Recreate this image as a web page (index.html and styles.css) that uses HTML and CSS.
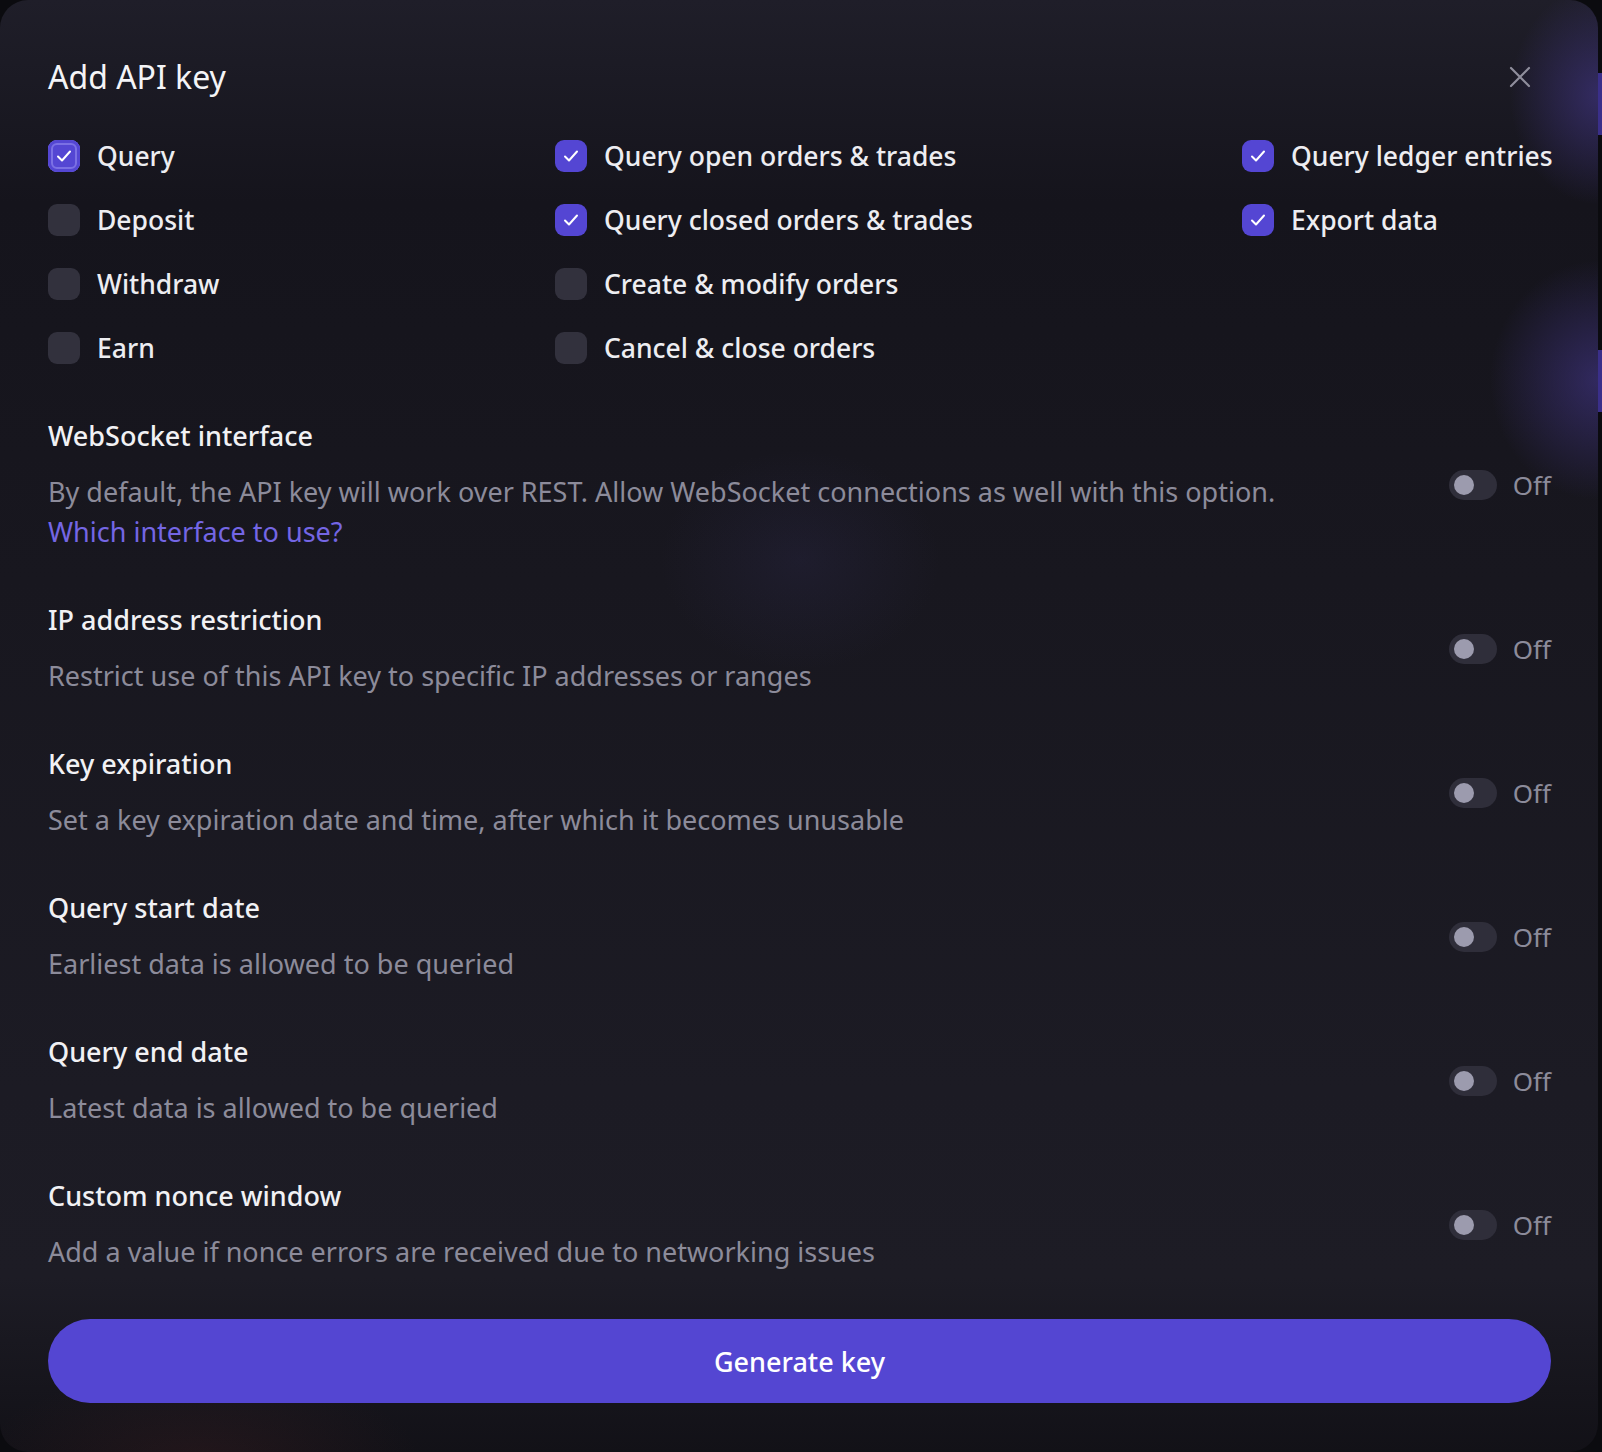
FILE: index.html
```html
<!DOCTYPE html>
<html lang="en">
<head>
<meta charset="utf-8">
<title>Add API key</title>
<link rel="stylesheet" href="styles.css">
</head>
<body>
<div class="modal">
  <header class="modal-header">
    <h1 class="modal-title">Add API key</h1>
    <button class="close-btn" aria-label="Close">
      <svg width="22" height="22" viewBox="0 0 22 22"><path d="M2 2L20 20M20 2L2 20" stroke="#8f8e9c" stroke-width="2.2" stroke-linecap="round" fill="none"/></svg>
    </button>
  </header>

  <div class="perm-grid">
    <div class="perm-col col-1">
      <label class="perm"><span class="cb checked focused"><svg viewBox="0 0 32 32"><path d="M10 16.5l4 4 8-9" /></svg></span><span class="perm-label">Query</span></label>
      <label class="perm"><span class="cb"></span><span class="perm-label">Deposit</span></label>
      <label class="perm"><span class="cb"></span><span class="perm-label">Withdraw</span></label>
      <label class="perm"><span class="cb"></span><span class="perm-label">Earn</span></label>
    </div>
    <div class="perm-col col-2">
      <label class="perm"><span class="cb checked"><svg viewBox="0 0 32 32"><path d="M10 16.5l4 4 8-9" /></svg></span><span class="perm-label">Query open orders &amp; trades</span></label>
      <label class="perm"><span class="cb checked"><svg viewBox="0 0 32 32"><path d="M10 16.5l4 4 8-9" /></svg></span><span class="perm-label">Query closed orders &amp; trades</span></label>
      <label class="perm"><span class="cb"></span><span class="perm-label">Create &amp; modify orders</span></label>
      <label class="perm"><span class="cb"></span><span class="perm-label">Cancel &amp; close orders</span></label>
    </div>
    <div class="perm-col col-3">
      <label class="perm"><span class="cb checked"><svg viewBox="0 0 32 32"><path d="M10 16.5l4 4 8-9" /></svg></span><span class="perm-label">Query ledger entries</span></label>
      <label class="perm"><span class="cb checked"><svg viewBox="0 0 32 32"><path d="M10 16.5l4 4 8-9" /></svg></span><span class="perm-label">Export data</span></label>
    </div>
  </div>

  <div class="settings">
    <div class="setting">
      <div class="setting-text">
        <div class="setting-title">WebSocket interface</div>
        <div class="setting-desc">By default, the API key will work over REST. Allow WebSocket connections as well with this option.</div>
        <a class="setting-link" href="#">Which interface to use?</a>
      </div>
      <div class="toggle-wrap"><span class="toggle"><span class="knob"></span></span><span class="toggle-label">Off</span></div>
    </div>
    <div class="setting">
      <div class="setting-text">
        <div class="setting-title">IP address restriction</div>
        <div class="setting-desc">Restrict use of this API key to specific IP addresses or ranges</div>
      </div>
      <div class="toggle-wrap"><span class="toggle"><span class="knob"></span></span><span class="toggle-label">Off</span></div>
    </div>
    <div class="setting">
      <div class="setting-text">
        <div class="setting-title">Key expiration</div>
        <div class="setting-desc">Set a key expiration date and time, after which it becomes unusable</div>
      </div>
      <div class="toggle-wrap"><span class="toggle"><span class="knob"></span></span><span class="toggle-label">Off</span></div>
    </div>
    <div class="setting">
      <div class="setting-text">
        <div class="setting-title">Query start date</div>
        <div class="setting-desc">Earliest data is allowed to be queried</div>
      </div>
      <div class="toggle-wrap"><span class="toggle"><span class="knob"></span></span><span class="toggle-label">Off</span></div>
    </div>
    <div class="setting">
      <div class="setting-text">
        <div class="setting-title">Query end date</div>
        <div class="setting-desc">Latest data is allowed to be queried</div>
      </div>
      <div class="toggle-wrap"><span class="toggle"><span class="knob"></span></span><span class="toggle-label">Off</span></div>
    </div>
    <div class="setting">
      <div class="setting-text">
        <div class="setting-title">Custom nonce window</div>
        <div class="setting-desc">Add a value if nonce errors are received due to networking issues</div>
      </div>
      <div class="toggle-wrap"><span class="toggle"><span class="knob"></span></span><span class="toggle-label">Off</span></div>
    </div>
  </div>

  <button class="generate-btn">Generate key</button>
</div>
</body>
</html>
```

FILE: styles.css
```css
* { box-sizing: border-box; }

html, body {
  margin: 0;
  padding: 0;
}

body {
  width: 1602px;
  height: 1452px;
  overflow: hidden;
  font-family: "Noto Sans", "Open Sans", sans-serif;
  background-color: #0b0b0f;
  background-image:
    linear-gradient(#3a2f8a, #3a2f8a),
    linear-gradient(#3a2f8a, #3a2f8a);
  background-repeat: no-repeat;
  background-size: 6px 62px, 6px 62px;
  background-position: 1598px 73px, 1598px 350px;
}

.modal {
  width: 1598px;
  height: 1452px;
  border-radius: 28px;
  padding: 56px 47px 48px 48px;
  display: flex;
  flex-direction: column;
  background:
    radial-gradient(ellipse 90px 110px at 1600px 95px, rgba(72, 58, 150, 0.55), rgba(72, 58, 150, 0) 100%),
    radial-gradient(ellipse 110px 120px at 1600px 380px, rgba(72, 58, 150, 0.55), rgba(72, 58, 150, 0) 100%),
    radial-gradient(ellipse 140px 110px at 800px 560px, rgba(60, 55, 110, 0.18), rgba(60, 55, 110, 0) 100%),
    radial-gradient(ellipse 220px 90px at 200px 1460px, rgba(90, 40, 40, 0.22), rgba(90, 40, 40, 0) 100%),
    linear-gradient(180deg, #1f1e29 0%, #15141c 14%, #18171f 40%, #1c1b24 75%, #1d1c25 88%, #121117 100%);
  color: #f2f2f5;
}

.modal-header {
  display: flex;
  align-items: center;
  justify-content: space-between;
  height: 42px;
}

.modal-title {
  margin: 0;
  font-size: 32px;
  font-weight: 400;
  line-height: 42px;
  color: #f4f4f7;
}

.close-btn {
  background: none;
  border: none;
  padding: 0;
  margin-right: 20px;
  width: 22px;
  height: 22px;
  display: flex;
  cursor: pointer;
}

.perm-grid {
  display: grid;
  grid-template-columns: 507px 687px 1fr;
  margin-top: 38px;
}

.perm-col {
  display: flex;
  flex-direction: column;
  gap: 24px;
}

.perm {
  display: flex;
  align-items: center;
  height: 40px;
  gap: 17px;
}

.cb {
  width: 32px;
  height: 32px;
  flex: 0 0 32px;
  border-radius: 9px;
  background: #32313d;
  display: flex;
  align-items: center;
  justify-content: center;
}

.cb.checked {
  background: #5446d3;
}

.cb.focused {
  box-shadow: inset 0 0 0 3px #5446d3, inset 0 0 0 5px #7b70e4;
}

.cb svg {
  width: 32px;
  height: 32px;
}

.cb svg path {
  fill: none;
  stroke: #ffffff;
  stroke-width: 2;
  stroke-linecap: round;
  stroke-linejoin: round;
}

.perm-label {
  font-size: 26.5px;
  font-weight: 500;
  color: #ededf1;
  white-space: nowrap;
}

.settings {
  display: flex;
  flex-direction: column;
  gap: 50px;
  margin-top: 50px;
}

.setting {
  display: flex;
  align-items: center;
  justify-content: space-between;
}

.setting-text {
  display: flex;
  flex-direction: column;
}

.setting-title {
  font-size: 27px;
  font-weight: 500;
  line-height: 36px;
  color: #f1f1f4;
}

.setting-desc {
  margin-top: 18px;
  font-size: 27px;
  line-height: 40px;
  color: #8c8b9a;
}

.setting-link {
  font-size: 27px;
  line-height: 40px;
  color: #7466e4;
  text-decoration: none;
}

.toggle-wrap {
  display: flex;
  align-items: center;
  gap: 16px;
}

.toggle {
  width: 48px;
  height: 30px;
  border-radius: 15px;
  background: #2f2e3a;
  display: flex;
  align-items: center;
  padding-left: 5px;
}

.knob {
  width: 20px;
  height: 20px;
  border-radius: 50%;
  background: #9c9bae;
}

.toggle-label {
  font-size: 26px;
  color: #8c8b9a;
  line-height: 40px;
}

.generate-btn {
  margin-top: 47px;
  height: 84px;
  width: 100%;
  border: none;
  border-radius: 42px;
  background: #5446d2;
  color: #ffffff;
  font-family: "Noto Sans", "Open Sans", sans-serif;
  font-size: 27px;
  font-weight: 500;
  cursor: pointer;
}
```
